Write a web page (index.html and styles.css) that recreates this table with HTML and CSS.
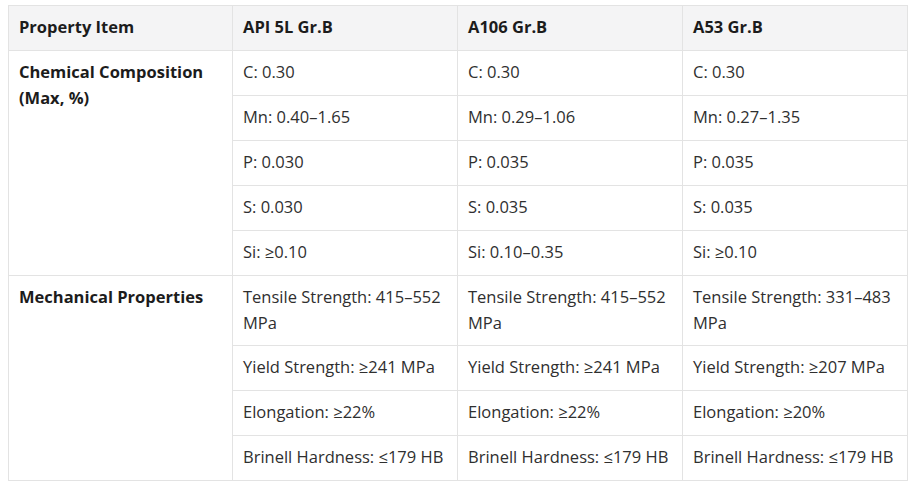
FILE: index.html
```html
<!DOCTYPE html>
<html>
<head>
<meta charset="utf-8">
<link rel="stylesheet" href="styles.css">
</head>
<body>
<table class="spec">
  <colgroup>
    <col class="c1"><col class="c2"><col class="c3"><col class="c4">
  </colgroup>
  <thead>
    <tr><th>Property Item</th><th>API 5L Gr.B</th><th>A106 Gr.B</th><th>A53 Gr.B</th></tr>
  </thead>
  <tbody>
    <tr><td rowspan="5" class="label">Chemical Composition (Max, %)</td><td>C: 0.30</td><td>C: 0.30</td><td>C: 0.30</td></tr>
    <tr><td>Mn: 0.40–1.65</td><td>Mn: 0.29–1.06</td><td>Mn: 0.27–1.35</td></tr>
    <tr><td>P: 0.030</td><td>P: 0.035</td><td>P: 0.035</td></tr>
    <tr><td>S: 0.030</td><td>S: 0.035</td><td>S: 0.035</td></tr>
    <tr><td>Si: ≥0.10</td><td>Si: 0.10–0.35</td><td>Si: ≥0.10</td></tr>
    <tr><td rowspan="4" class="label">Mechanical Properties</td><td>Tensile Strength: 415–552 MPa</td><td>Tensile Strength: 415–552 MPa</td><td>Tensile Strength: 331–483 MPa</td></tr>
    <tr><td>Yield Strength: ≥241 MPa</td><td>Yield Strength: ≥241 MPa</td><td>Yield Strength: ≥207 MPa</td></tr>
    <tr><td>Elongation: ≥22%</td><td>Elongation: ≥22%</td><td>Elongation: ≥20%</td></tr>
    <tr><td>Brinell Hardness: ≤179 HB</td><td>Brinell Hardness: ≤179 HB</td><td>Brinell Hardness: ≤179 HB</td></tr>
  </tbody>
</table>
</body>
</html>
```
FILE: styles.css
```css
html, body {
  background: #ffffff;
}
body {
  margin: 5px 8px;
  font-family: "Open Sans", "Noto Sans", sans-serif;
  font-size: 16.5px;
  color: #2f2f2f;
}
.spec {
  border-collapse: collapse;
  table-layout: fixed;
  width: 900px;
}
.c1 { width: 224px; }
.c2, .c3, .c4 { width: 225px; }
.spec th,
.spec td {
  border: 1px solid #e3e3e3;
  padding: 8px 8px 10px 10px;
  line-height: 26px;
  text-align: left;
  vertical-align: top;
}
.spec tbody tr:nth-child(6) td {
  padding-bottom: 9px;
}
.spec th {
  background: #f4f4f5;
  font-weight: 700;
  color: #1c1c1c;
}
.spec td.label {
  font-weight: 700;
  color: #1c1c1c;
  padding-bottom: 10px;
}
```
